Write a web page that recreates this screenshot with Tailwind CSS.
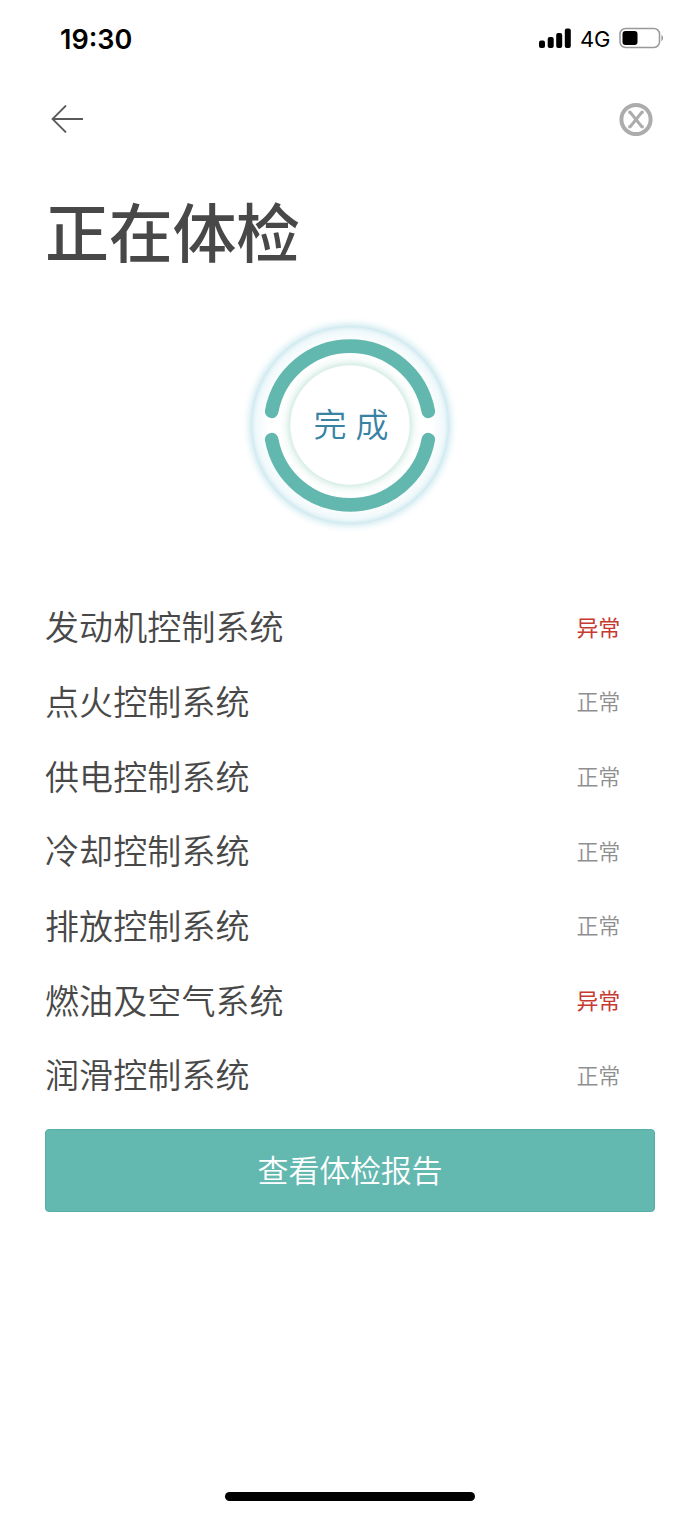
<!DOCTYPE html>
<html lang="zh-CN">
<head>
    <meta charset="utf-8">
    <meta name="viewport" content="width=device-width, initial-scale=1">
    <title>正在体检</title>
    <script src="https://cdn.jsdelivr.net/npm/@tailwindcss/browser@4"></script>
</head>
<body class="bg-white text-[#484848] font-['Noto_Sans_CJK_SC',sans-serif]">
    <div class="w-[700px] h-[1514px] mx-auto flex flex-col overflow-hidden">
        <!-- status bar -->
        <div class="h-[76px] shrink-0 pl-[60px] pr-9 flex items-center justify-between text-black font-['Inter',sans-serif]">
            <span class="text-[27px] font-semibold leading-none pt-0.5">19:30</span>
            <div class="flex items-center">
                <svg class="w-8 h-5" viewBox="0 0 32 20">
                    <rect x="0" y="12.5" width="6" height="7.5" rx="2"/>
                    <rect x="8.7" y="9" width="6" height="11" rx="2"/>
                    <rect x="17.2" y="5" width="6" height="15" rx="2"/>
                    <rect x="25.8" y="0.5" width="6" height="19.5" rx="2"/>
                </svg>
                <span class="ml-[9px] w-[31px] text-[22px] leading-none tracking-[-0.3px] pt-0.5">4G</span>
                <svg class="ml-2 w-[45px] h-[22px]" viewBox="0 0 45 22">
                    <rect x="1" y="1.5" width="39.5" height="19" rx="5.5" fill="none" stroke="#999" stroke-width="1.5"/>
                    <rect x="3.5" y="4" width="15" height="14" rx="3"/>
                    <path d="M42.5 7.5 Q45.5 11 42.5 14.5 Z" fill="#888"/>
                </svg>
            </div>
        </div>

        <!-- nav -->
        <div class="h-[86px] shrink-0 pl-[51px] pr-[47px] flex items-center justify-between">
            <button>
                <svg class="w-8 h-7" viewBox="0 0 32 28" fill="none" stroke="#5a5a5a" stroke-width="1.8">
                    <path d="M32 14H1.5M15 0.5L1.5 14L15 27.5"/>
                </svg>
            </button>
            <button>
                <svg class="w-[34px] h-[34px]" viewBox="0 0 34 34" fill="none" stroke="#acacac">
                    <circle cx="17" cy="17.5" r="14.6" stroke-width="4"/>
                    <path d="M9.3 10.2H11.2L22.8 24.8H24.7M24.7 10.2H22.8L11.2 24.8H9.3" stroke-width="3"/>
                </svg>
            </button>
        </div>

        <h1 class="mt-[22px] pl-[45px] h-[90px] shrink-0 text-[64px] leading-[90px] font-medium tracking-[-0.3px]">正在体检</h1>

        <!-- progress ring -->
        <div class="mt-[5px] h-[292px] shrink-0 flex justify-center items-center">
            <div class="relative w-[220px] h-[220px] flex items-center justify-center">
                <svg class="absolute inset-0 w-full h-full overflow-visible" viewBox="-110 -110 220 220" fill="none">
                    <defs>
                        <radialGradient id="glow" gradientUnits="userSpaceOnUse" cx="0" cy="0" r="110">
                            <stop offset="0.74" stop-color="#fff"/>
                            <stop offset="0.85" stop-color="#f1f9fb"/>
                            <stop offset="0.875" stop-color="#e4f3f8"/>
                            <stop offset="0.895" stop-color="#d2ebf0"/>
                            <stop offset="0.915" stop-color="#e4f3f6"/>
                            <stop offset="0.95" stop-color="#f8fcfd"/>
                            <stop offset="0.98" stop-color="#fff"/>
                        </radialGradient>
                        <radialGradient id="inner" gradientUnits="userSpaceOnUse" cx="0" cy="0" r="70">
                            <stop offset="0.845" stop-color="#fff"/>
                            <stop offset="0.86" stop-color="#d9eee9"/>
                            <stop offset="0.89" stop-color="#e6f4f0"/>
                            <stop offset="0.93" stop-color="#f5fbf9"/>
                            <stop offset="1" stop-color="#fff"/>
                        </radialGradient>
                    </defs>
                    <circle r="110" fill="url(#glow)"/>
                    <circle r="70" fill="url(#inner)"/>
                    <g stroke="#62b8ae" stroke-width="13.6" stroke-linecap="round">
                        <path d="M-78.3 -13.6A79.6 79.6 0 0 1 78.3 -13.6"/>
                        <path d="M-78.3 14.6A79.6 79.6 0 0 0 78.3 14.6"/>
                    </g>
                </svg>
                <span class="relative flex gap-[9px] pl-0.5 pb-1 text-[33px] leading-none font-[350] text-[#3a82a4]"><span>完</span><span>成</span></span>
            </div>
        </div>

        <!-- check results -->
        <ul class="mt-[18px] pl-[45px] pr-[80px] text-[34px] leading-none font-[350] tracking-[0.1px]">
            <li class="h-[74.65px] flex items-center justify-between">
                <span>发动机控制系统</span>
                <span class="pb-px text-[22px] font-normal tracking-[-0.3px] text-[#c73a32]">异常</span>
            </li>
            <li class="h-[74.65px] flex items-center justify-between">
                <span>点火控制系统</span>
                <span class="pb-px text-[22px] tracking-[-0.3px] text-[#8f8f8f]">正常</span>
            </li>
            <li class="h-[74.65px] flex items-center justify-between">
                <span>供电控制系统</span>
                <span class="pb-px text-[22px] tracking-[-0.3px] text-[#8f8f8f]">正常</span>
            </li>
            <li class="h-[74.65px] flex items-center justify-between">
                <span>冷却控制系统</span>
                <span class="pb-px text-[22px] tracking-[-0.3px] text-[#8f8f8f]">正常</span>
            </li>
            <li class="h-[74.65px] flex items-center justify-between">
                <span>排放控制系统</span>
                <span class="pb-px text-[22px] tracking-[-0.3px] text-[#8f8f8f]">正常</span>
            </li>
            <li class="h-[74.65px] flex items-center justify-between">
                <span>燃油及空气系统</span>
                <span class="pb-px text-[22px] font-normal tracking-[-0.3px] text-[#c73a32]">异常</span>
            </li>
            <li class="h-[74.65px] flex items-center justify-between">
                <span>润滑控制系统</span>
                <span class="pb-px text-[22px] tracking-[-0.3px] text-[#8f8f8f]">正常</span>
            </li>
        </ul>

        <button class="mt-[17.4px] mx-[45px] h-[83px] shrink-0 rounded-[4px] bg-[#63b8b0] border border-[#58aea5] text-white text-[31px] leading-none font-[350] tracking-[-0.2px] pb-[3px]">查看体检报告</button>

        <!-- home indicator -->
        <div class="mt-auto mb-[13px] mx-auto w-[250px] h-[9px] shrink-0 rounded-full bg-black"></div>
    </div>
</body>
</html>
